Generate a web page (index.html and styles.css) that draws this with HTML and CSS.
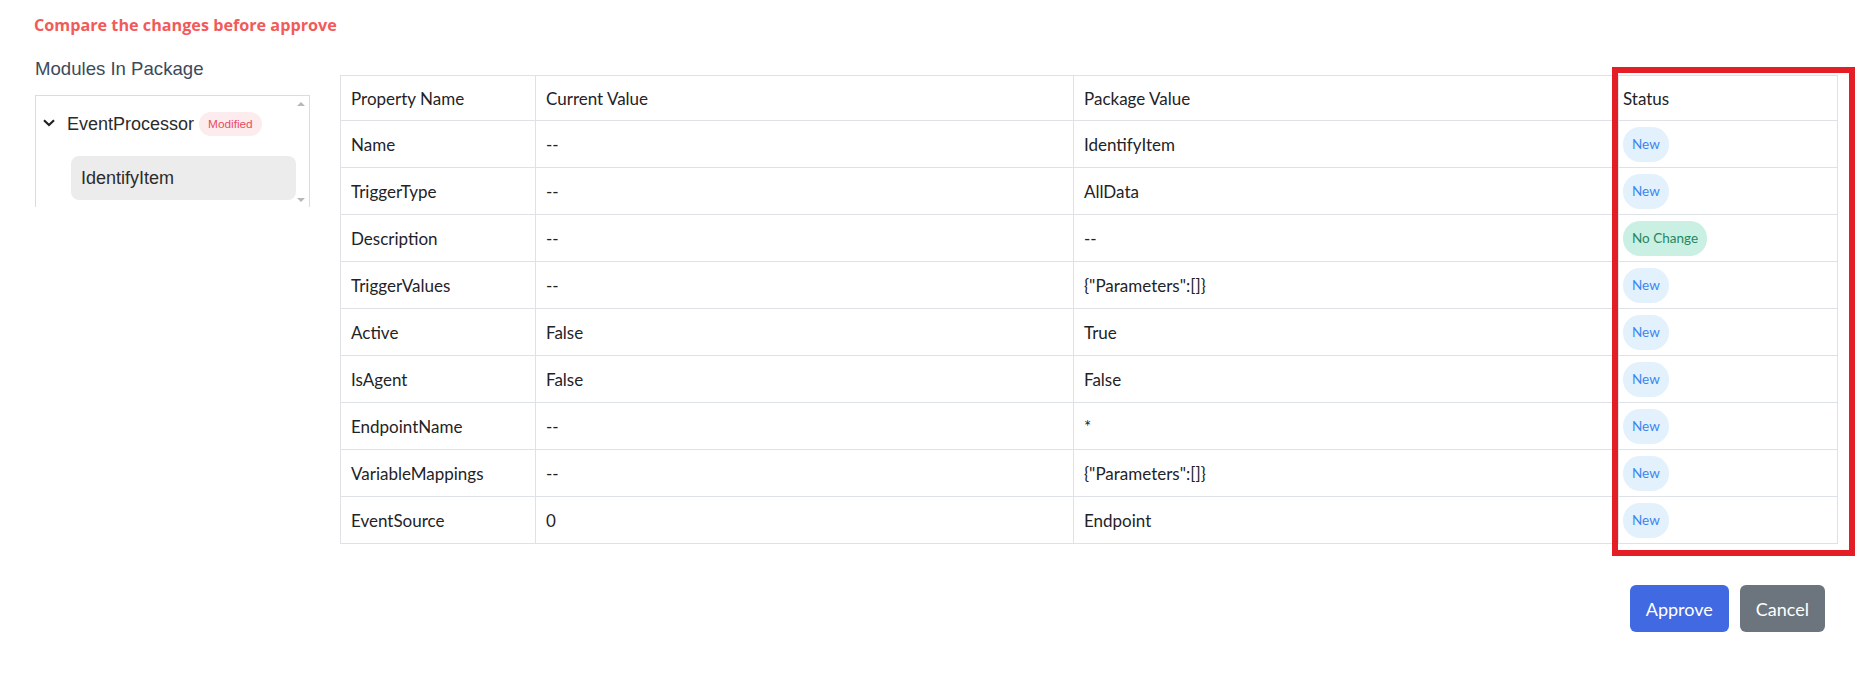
FILE: index.html
```html
<!DOCTYPE html>
<html>
<head>
<meta charset="utf-8">
<link rel="stylesheet" href="styles.css">
</head>
<body>
<div class="page">
  <div class="title">Compare the changes before approve</div>
  <div class="main">
    <div class="left">
      <div class="modules-title">Modules In Package</div>
      <div class="tree">
        <div class="tree-node">
          <svg class="chev" width="12" height="8" viewBox="0 0 12 8"><path d="M1 1.2 L6 6 L11 1.2" fill="none" stroke="#222" stroke-width="2.2"/></svg>
          <span class="node-label">EventProcessor</span>
          <span class="badge-mod">Modified</span>
        </div>
        <div class="tree-child">IdentifyItem</div>
        <span class="scroll-up"></span>
        <span class="scroll-down"></span>
      </div>
    </div>
    <div class="right">
      <div class="table-wrap">
        <table class="cmp">
          <colgroup>
            <col class="c1"><col class="c2"><col class="c3"><col class="c4">
          </colgroup>
          <thead>
            <tr><th>Property Name</th><th>Current Value</th><th>Package Value</th><th>Status</th></tr>
          </thead>
          <tbody>
            <tr><td>Name</td><td>--</td><td>IdentifyItem</td><td><span class="pill new">New</span></td></tr>
            <tr><td>TriggerType</td><td>--</td><td>AllData</td><td><span class="pill new">New</span></td></tr>
            <tr><td>Description</td><td>--</td><td>--</td><td><span class="pill same">No Change</span></td></tr>
            <tr><td>TriggerValues</td><td>--</td><td>{"Parameters":[]}</td><td><span class="pill new">New</span></td></tr>
            <tr><td>Active</td><td>False</td><td>True</td><td><span class="pill new">New</span></td></tr>
            <tr><td>IsAgent</td><td>False</td><td>False</td><td><span class="pill new">New</span></td></tr>
            <tr><td>EndpointName</td><td>--</td><td>*</td><td><span class="pill new">New</span></td></tr>
            <tr><td>VariableMappings</td><td>--</td><td>{"Parameters":[]}</td><td><span class="pill new">New</span></td></tr>
            <tr><td>EventSource</td><td>0</td><td>Endpoint</td><td><span class="pill new">New</span></td></tr>
          </tbody>
        </table>
        <div class="highlight"></div>
      </div>
      <div class="actions">
        <button class="btn approve">Approve</button>
        <button class="btn cancel">Cancel</button>
      </div>
    </div>
  </div>
</div>
</body>
</html>
```
FILE: styles.css
```css
* { box-sizing: border-box; }
html, body { margin: 0; padding: 0; background: #fff; }
body { font-family: Lato, "Open Sans", sans-serif; color: #212529; }

.page {
  width: 1873px;
  height: 673px;
  padding: 15px 0 0 34px;
  overflow: hidden;
}

.title {
  font-family: "Open Sans", Lato, sans-serif;
  font-weight: 700;
  font-size: 16.2px;
  line-height: 20px;
  color: #f25a5a;
}

.main {
  display: flex;
  gap: 30px;
  margin-top: 23px;
}

.left { width: 276px; flex: none; }

.modules-title {
  font-family: "Liberation Sans", Arial, sans-serif;
  font-size: 18.6px;
  line-height: 22px;
  color: #3c4a5c;
  margin: 0 0 0 1px;
}

.tree {
  position: relative;
  margin-top: 15px;
  margin-left: 1px;
  width: 275px;
  height: 112px;
  border: 1px solid #dcdcdc;
  border-bottom: none;
  padding: 15px 0 0 7px;
}

.tree-node {
  display: flex;
  align-items: center;
  height: 26px;
}
.chev { flex: none; margin-right: 12px; margin-top: -2px; }
.node-label {
  font-family: "Liberation Sans", Arial, sans-serif;
  font-size: 18px;
  color: #2b2b2b;
}
.badge-mod {
  margin-left: 5px;
  font-family: "Liberation Sans", Arial, sans-serif;
  font-size: 11.8px;
  color: #ea4a62;
  background: #fdecee;
  border-radius: 12px;
  padding: 5px 9px;
  line-height: 14px;
}

.tree-child {
  margin: 19px 0 0 28px;
  width: 225px;
  height: 44px;
  background: #ececec;
  border-radius: 8px;
  font-family: "Liberation Sans", Arial, sans-serif;
  font-size: 18px;
  color: #2b2b2b;
  padding: 0 0 0 10px;
  display: flex;
  align-items: center;
}

.scroll-up, .scroll-down {
  position: absolute;
  right: 4px;
  width: 0; height: 0;
  border-left: 4px solid transparent;
  border-right: 4px solid transparent;
}
.scroll-up { top: 6px; border-bottom: 4px solid #b8b8b8; }
.scroll-down { bottom: 5px; border-top: 4px solid #b8b8b8; }

.right { width: 1497px; flex: none; margin-top: 17px; }

.table-wrap { position: relative; }

table.cmp {
  width: 1497px;
  border-collapse: collapse;
  table-layout: fixed;
  font-size: 17px;
}
col.c1 { width: 195px; }
col.c2 { width: 538px; }
col.c3 { width: 545px; }
col.c4 { width: 219px; }

.cmp th, .cmp td {
  border: 1px solid #dee2e6;
  text-align: left;
  font-weight: 400;
  padding: 0 10px;
  vertical-align: middle;
  color: #1f2327;
}
.cmp th { height: 45px; }
.cmp td { height: 47px; }
.cmp td:last-child, .cmp th:last-child { padding-left: 4px; }

.pill {
  display: inline-block;
  height: 35px;
  line-height: 35px;
  padding: 0 9px;
  border-radius: 17px;
  font-size: 13.5px;
  vertical-align: middle;
}
.pill.new { background: #e3f1fd; color: #3a86f0; }
.pill.same { background: #c9f0e3; color: #25875f; }

.highlight {
  position: absolute;
  top: -8px;
  right: -18px;
  width: 243px;
  bottom: -12px;
  border: 6px solid #e31e24;
  pointer-events: none;
}

.actions {
  display: flex;
  justify-content: flex-end;
  gap: 11px;
  margin-top: 41px;
  padding-right: 12px;
}
.btn {
  font-family: Lato, sans-serif;
  font-size: 18px;
  color: #fff;
  border: none;
  border-radius: 6px;
  height: 47px;
  padding: 0 16px;
  cursor: pointer;
}
.btn.approve { background: #4169e1; }
.btn.cancel { background: #6c757d; }
```
